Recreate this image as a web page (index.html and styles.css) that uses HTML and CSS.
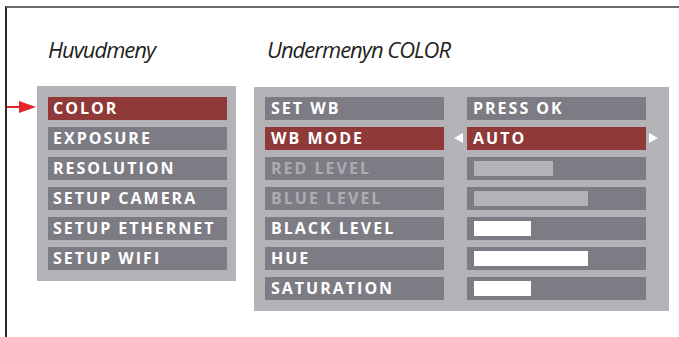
FILE: index.html
```html
<!DOCTYPE html>
<html lang="sv">
<head>
    <meta charset="UTF-8">
    <meta name="viewport" content="width=device-width, initial-scale=1.0">
    <title>Huvudmeny</title>
    <link rel="stylesheet" href="styles.css">
</head>
<body>
    <div class="frame">
        <div class="headings">
            <h2 class="main-title">Huvudmeny</h2>
            <h2 class="sub-title">Undermenyn COLOR</h2>
        </div>

        <div class="menus">
            <div class="panel main-menu">
                <span class="pointer"></span>
                <div class="row active">COLOR</div>
                <div class="row">EXPOSURE</div>
                <div class="row">RESOLUTION</div>
                <div class="row">SETUP CAMERA</div>
                <div class="row">SETUP ETHERNET</div>
                <div class="row">SETUP WIFI</div>
            </div>

            <div class="panel sub-menu">
                <div class="row">SET WB</div>
                <div class="row">PRESS OK</div>

                <div class="row active">WB MODE</div>
                <div class="row active value-select">AUTO</div>

                <div class="row disabled">RED LEVEL</div>
                <div class="row"><span class="bar dim" style="width: 79px;"></span></div>

                <div class="row disabled">BLUE LEVEL</div>
                <div class="row"><span class="bar dim" style="width: 114px;"></span></div>

                <div class="row">BLACK LEVEL</div>
                <div class="row"><span class="bar" style="width: 57px;"></span></div>

                <div class="row">HUE</div>
                <div class="row"><span class="bar" style="width: 114px;"></span></div>

                <div class="row">SATURATION</div>
                <div class="row"><span class="bar" style="width: 57px;"></span></div>
            </div>
        </div>
    </div>
</body>
</html>
```

FILE: styles.css
```css
html, body {
    margin: 0;
    padding: 0;
    background-color: #fff;
}
.frame {
    margin: 6px 0 0 5px;
    border-top: 2px solid #6b6b6b;
    border-left: 2px solid #2a2a2a;
    height: 331px;
    box-sizing: border-box;
    padding-left: 30px;
}
.headings {
    display: grid;
    grid-template-columns: 217px 415px;
    height: 77px;
}
.headings h2 {
    margin: 0;
    padding-top: 26px;
    font-family: "Open Sans", sans-serif;
    font-style: italic;
    font-weight: 400;
    font-size: 22px;
    line-height: 30px;
    letter-spacing: -1px;
    color: #231f20;
}
.main-title {
    padding-left: 11px;
}
.sub-title {
    padding-left: 13px;
}
.menus {
    display: flex;
    align-items: flex-start;
    gap: 18px;
}
.panel {
    position: relative;
    background-color: #b3b2b7;
    display: grid;
    row-gap: 7px;
    font-family: "Open Sans", sans-serif;
    font-weight: 700;
    font-size: 16px;
    letter-spacing: 2px;
    color: #fff;
}
.main-menu {
    width: 179px;
    padding: 11px 9px 11px 11px;
    margin-top: 1px;
}
.sub-menu {
    width: 381px;
    grid-template-columns: 179px 179px;
    column-gap: 23px;
    padding: 10px 23px 11px 11px;
    margin-top: 2px;
}
.row {
    position: relative;
    height: 23px;
    line-height: 23px;
    padding: 0 6px;
    background-color: #7d7c84;
    white-space: nowrap;
}
.main-menu .row {
    padding-left: 5px;
}
.row.active {
    background-color: #8f3939;
}
.row.disabled {
    color: #adacb1;
}
.bar {
    display: block;
    margin: 4px 0 0 1px;
    height: 15px;
    background-color: #fff;
}
.bar.dim {
    background-color: #b3b2b7;
}
.value-select::before,
.value-select::after {
    content: "";
    position: absolute;
    top: 6px;
    border-top: 5.5px solid transparent;
    border-bottom: 5.5px solid transparent;
}
.value-select::before {
    left: -13px;
    border-right: 9px solid #fff;
}
.value-select::after {
    right: -12px;
    border-left: 9px solid #fff;
}
.pointer {
    position: absolute;
    left: -30px;
    top: 15px;
    width: 29px;
    height: 12px;
}
.pointer::before {
    content: "";
    position: absolute;
    left: 0;
    top: 5px;
    width: 14px;
    height: 2px;
    background-color: #e3242b;
}
.pointer::after {
    content: "";
    position: absolute;
    right: 0;
    top: 0;
    border-top: 6px solid transparent;
    border-bottom: 6px solid transparent;
    border-left: 17px solid #e3242b;
}
```
